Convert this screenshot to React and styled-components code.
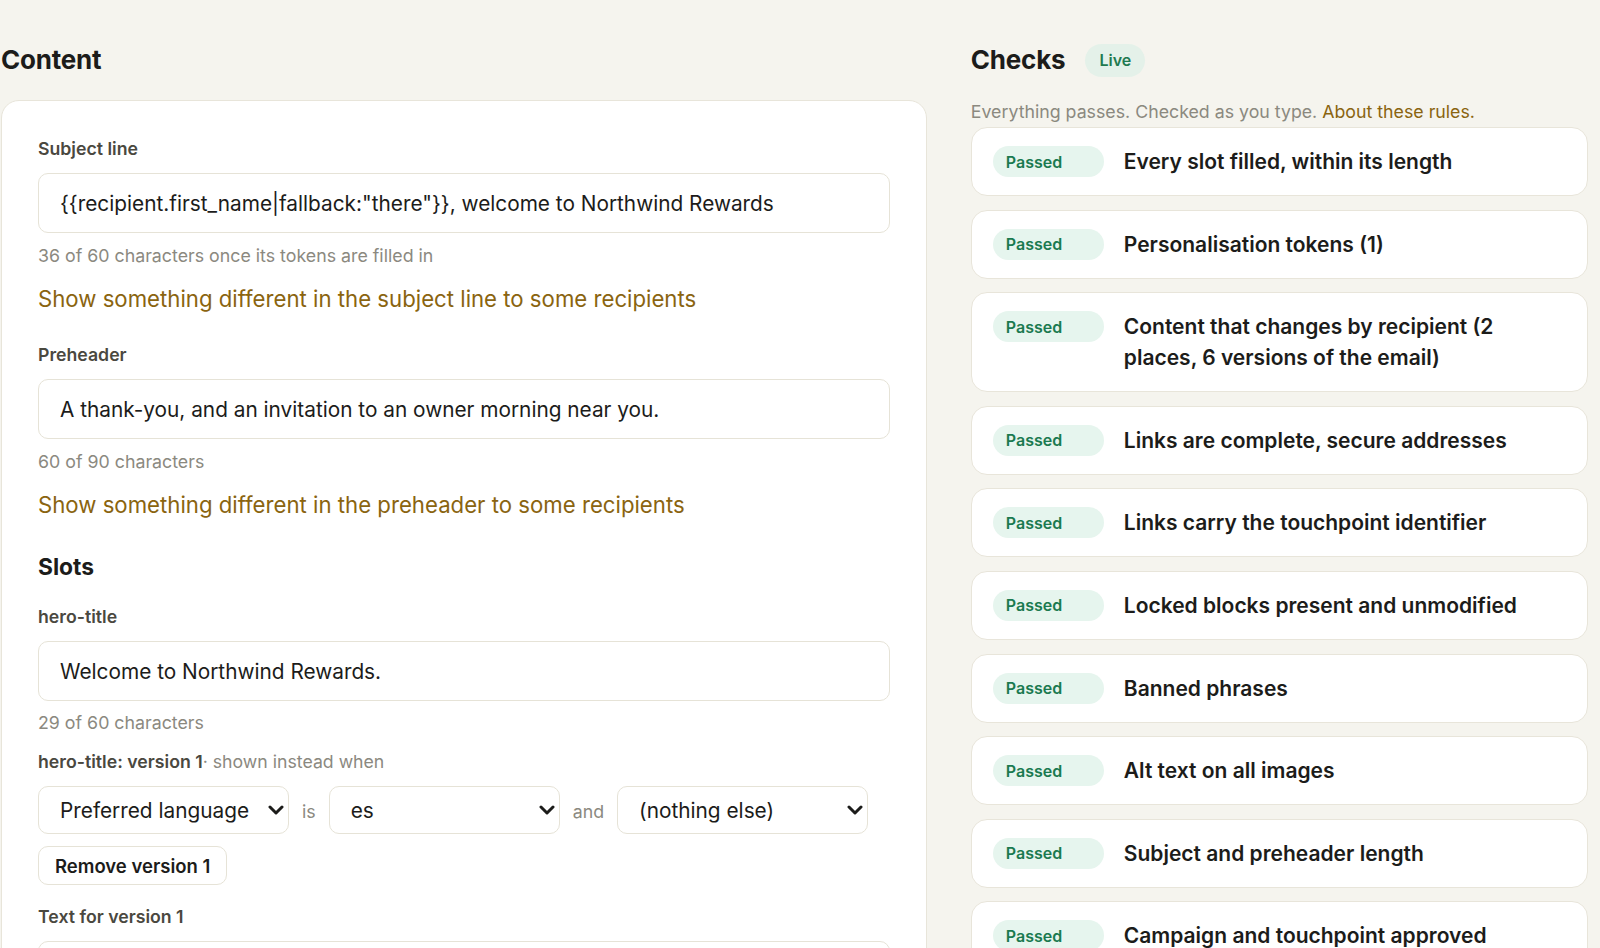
import React from 'react';
import styled, { createGlobalStyle } from 'styled-components';

const GlobalStyle = createGlobalStyle`
  html, body {
    margin: 0;
    padding: 0;
    overflow: hidden;
    background: #f5f4ee;
  }
  body {
    font-family: Inter, "Noto Sans", "Liberation Sans", sans-serif;
    color: #1c1c1a;
  }
  * { box-sizing: border-box; }
`

const Page = styled.div`
  display: grid;
  grid-template-columns: 3fr 2fr;
  column-gap: 44px;
  padding: 43px 12px 0 1px;
  align-items: start;
`

const Column = styled.section`
  display: flex;
  flex-direction: column;
`

const SectionTitle = styled.h2`
  margin: 0;
  font-size: 26px;
  line-height: 34px;
  font-weight: 700;
  letter-spacing: -0.2px;
  color: #1c1c1a;
`

const Card = styled.div`
  margin-top: 23px;
  background: #fff;
  border: 1px solid #e8e5da;
  border-radius: 18px;
  padding: 36px 36px 40px;
  display: flex;
  flex-direction: column;
`

const Label = styled.div`
  font-size: 17.7px;
  line-height: 24px;
  font-weight: 600;
  color: #4a483f;
  margin-top: ${props => props.gap || 0}px;
`

const Muted = styled.span`
  font-weight: 400;
  color: #8b897f;
`

const TextInput = styled.input`
  margin-top: 12px;
  width: 100%;
  height: 60px;
  padding: 0 21px;
  font-family: inherit;
  font-size: 20.8px;
  color: #1c1c1a;
  background: #fff;
  border: 1px solid #e6e3d7;
  border-radius: 10px;
  outline: none;
`

const Hint = styled.div`
  margin-top: ${props => props.gap || 11}px;
  font-size: 17.8px;
  line-height: 24px;
  color: #8b897f;
`

const VariantLink = styled.a`
  margin-top: 17px;
  font-size: 22.2px;
  line-height: 28px;
  color: #8a6410;
  text-decoration: none;
  cursor: pointer;
`

const SubTitle = styled.h3`
  margin: 33px 0 0;
  font-size: 22.8px;
  line-height: 30px;
  font-weight: 700;
  color: #1c1c1a;
`

const ConditionRow = styled.div`
  margin-top: 12px;
  display: flex;
  align-items: baseline;
  gap: 13px;
`

const SelectWrap = styled.div`
  position: relative;
  width: ${props => props.width}px;
  height: 48px;
  flex: none;

  svg {
    position: absolute;
    right: 5px;
    top: 19px;
    pointer-events: none;
  }
`

const Select = styled.select`
  appearance: none;
  width: 100%;
  height: 100%;
  padding: 0 36px 0 21px;
  font-family: inherit;
  font-size: 20.8px;
  color: #1c1c1a;
  background: #fff;
  border: 1px solid #e6e3d7;
  border-radius: 10px;
  outline: none;
`

const Joiner = styled.span`
  font-size: 17.8px;
  color: #8b897f;
`

const GhostButton = styled.button`
  align-self: flex-start;
  margin-top: 12px;
  height: 39px;
  padding: 0 16px;
  font-family: inherit;
  font-size: 18.5px;
  font-weight: 600;
  color: #1c1c1a;
  background: #fff;
  border: 1px solid #e6e3d7;
  border-radius: 10px;
  cursor: pointer;
`

const ChecksHeader = styled.div`
  display: flex;
  align-items: center;
  gap: 20px;
  height: 34px;
`

const LivePill = styled.span`
  display: inline-flex;
  align-items: center;
  height: 33px;
  padding: 0 14px;
  border-radius: 999px;
  background: #e4f1e9;
  color: #1f7a50;
  font-size: 16px;
  font-weight: 600;
`

const Summary = styled.p`
  margin: 23px 0 0;
  font-size: 17.75px;
  line-height: 24px;
  color: #8b897f;

  a {
    color: #8a6410;
    text-decoration: none;
  }
`

const CheckList = styled.ul`
  list-style: none;
  margin: 3px 0 0;
  padding: 0;
  display: flex;
  flex-direction: column;
  gap: 13.6px;
`

const CheckCard = styled.li`
  display: flex;
  align-items: flex-start;
  gap: 20px;
  padding: 18px 24px 18px 21px;
  background: #fff;
  border: 1px solid #e8e5da;
  border-radius: 16px;
`

const StatusPill = styled.span`
  flex: none;
  display: flex;
  align-items: center;
  width: 111px;
  height: 31px;
  padding: 0 13px;
  border-radius: 999px;
  background: #e6f5ee;
  color: #1b7a50;
  font-size: 16px;
  font-weight: 600;
`

const CheckTitle = styled.span`
  font-size: 21px;
  line-height: 31px;
  font-weight: 600;
  color: #1c1c1a;
`

const checks = [
  'Every slot filled, within its length',
  'Personalisation tokens (1)',
  'Content that changes by recipient (2 places, 6 versions of the email)',
  'Links are complete, secure addresses',
  'Links carry the touchpoint identifier',
  'Locked blocks present and unmodified',
  'Banned phrases',
  'Alt text on all images',
  'Subject and preheader length',
  'Campaign and touchpoint approved',
  'Footer and unsubscribe link present',
]

const Chevron = () => (
  <svg width="16" height="10" viewBox="0 0 16 10" fill="none">
    <path d="M2 2 L8 8 L14 2" stroke="#1c1c1a" strokeWidth="3" strokeLinecap="round" strokeLinejoin="round" />
  </svg>
)

const Dropdown = ({ width, value, options }) => (
  <SelectWrap width={width}>
    <Select defaultValue={value}>
      {options.map(o => <option key={o}>{o}</option>)}
    </Select>
    <Chevron />
  </SelectWrap>
)

export default function App() {
  return (
    <>
      <GlobalStyle />
      <Page>
        <Column>
          <SectionTitle>Content</SectionTitle>
          <Card>
            <Label>Subject line</Label>
            <TextInput defaultValue={'{{recipient.first_name|fallback:"there"}}, welcome to Northwind Rewards'} />
            <Hint>36 of 60 characters once its tokens are filled in</Hint>
            <VariantLink>Show something different in the subject line to some recipients</VariantLink>

            <Label gap={30}>Preheader</Label>
            <TextInput defaultValue="A thank-you, and an invitation to an owner morning near you." />
            <Hint>60 of 90 characters</Hint>
            <VariantLink>Show something different in the preheader to some recipients</VariantLink>

            <SubTitle>Slots</SubTitle>
            <Label gap={23}>hero-title</Label>
            <TextInput defaultValue="Welcome to Northwind Rewards." />
            <Hint gap={10}>29 of 60 characters</Hint>

            <Label gap={15}>hero-title: version 1<Muted>· shown instead when</Muted></Label>
            <ConditionRow>
              <Dropdown width={251} value="Preferred language" options={['Preferred language', 'Country', 'Tier']} />
              <Joiner>is</Joiner>
              <Dropdown width={231} value="es" options={['en', 'es', 'fr']} />
              <Joiner>and</Joiner>
              <Dropdown width={251} value="(nothing else)" options={['(nothing else)', 'Country', 'Tier']} />
            </ConditionRow>
            <GhostButton>Remove version 1</GhostButton>

            <Label gap={20}>Text for version 1</Label>
            <TextInput defaultValue="Bienvenido a Northwind Rewards." />
            <Hint>31 of 60 characters</Hint>
          </Card>
        </Column>

        <Column>
          <ChecksHeader>
            <SectionTitle>Checks</SectionTitle>
            <LivePill>Live</LivePill>
          </ChecksHeader>
          <Summary>
            Everything passes. Checked as you type. <a>About these rules.</a>
          </Summary>
          <CheckList>
            {checks.map(c => (
              <CheckCard key={c}>
                <StatusPill>Passed</StatusPill>
                <CheckTitle>{c}</CheckTitle>
              </CheckCard>
            ))}
          </CheckList>
        </Column>
      </Page>
    </>
  );
}
